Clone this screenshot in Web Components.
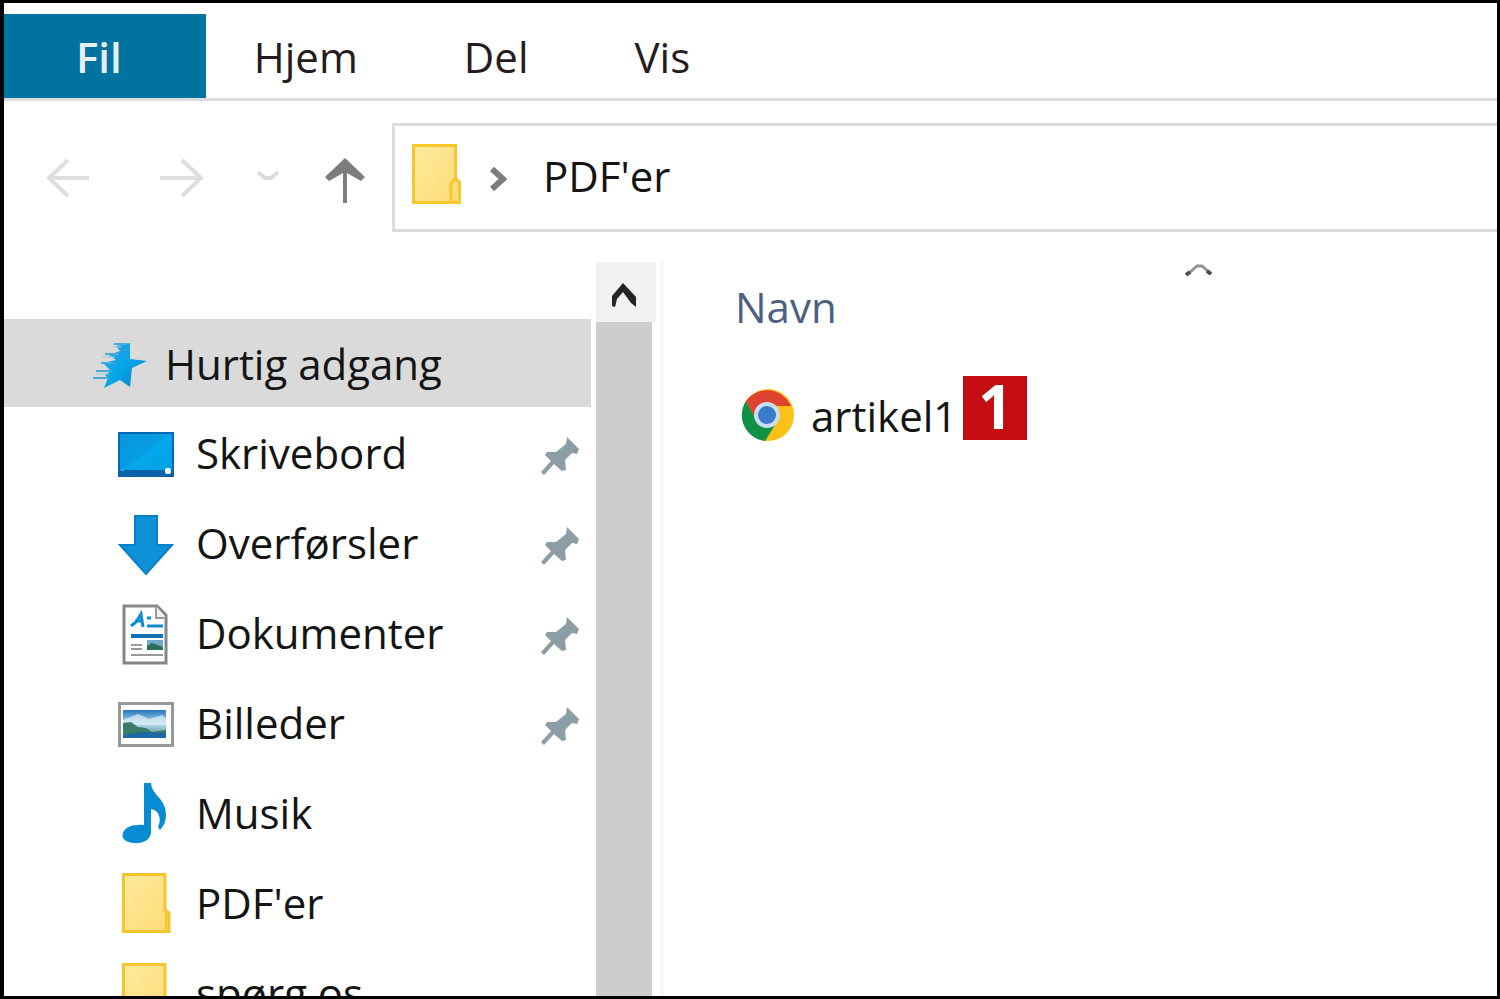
<!DOCTYPE html>
<html lang="da">
<head>
<meta charset="utf-8">
<title>PDF'er</title>
<style>
    html, body{
        height: 100%;
        margin: 0;
    }
    body{
        background: #fff;
        color: #141414;
        font-family: "Open Sans", "Noto Sans", sans-serif;
        font-size: 42px;
        line-height: 58px;
    }
</style>
</head>
<body>
<explorer-window>
    <ribbon-tabs slot="ribbon">
        <ribbon-tab active>Fil</ribbon-tab>
        <ribbon-tab>Hjem</ribbon-tab>
        <ribbon-tab>Del</ribbon-tab>
        <ribbon-tab>Vis</ribbon-tab>
    </ribbon-tabs>
    <address-bar slot="address">PDF'er</address-bar>
    <side-tree slot="sidebar">
        <tree-item icon="star" root>Hurtig adgang</tree-item>
        <tree-item icon="desktop" pinned>Skrivebord</tree-item>
        <tree-item icon="download" pinned>Overførsler</tree-item>
        <tree-item icon="document" pinned>Dokumenter</tree-item>
        <tree-item icon="picture" pinned>Billeder</tree-item>
        <tree-item icon="music">Musik</tree-item>
        <tree-item icon="folder">PDF'er</tree-item>
        <tree-item icon="folder">spørg os</tree-item>
    </side-tree>
    <file-list>
        <span slot="column">Navn</span>
        <span slot="file">artikel1</span>
        <step-badge slot="badge">1</step-badge>
    </file-list>
</explorer-window>

<script>
const icons = {
    star: {
        width: 56, height: 68,
        body: `
        <defs><linearGradient id="g" x1="0" y1="0" x2="1" y2="1">
            <stop offset="0" stop-color="#39a3dc"/><stop offset=".5" stop-color="#04a5e8"/><stop offset="1" stop-color="#1479bd"/>
        </linearGradient></defs>
        <path fill="url(#g)" d="M41 14V30L58 32 43 39 41 58 31 51 15 59 19 49 16 46 22 42 14 34 27 31 20 26 31 22 27 17Z"/>
        <path fill="none" stroke="#4aa8dc" stroke-width="2" d="M25 15H38M16 25H30M12 34H24M7 42H23M4 49H20"/>
        <path fill="none" stroke="#a3c9dc" stroke-width="1" d="M22 18H32M13 28H26M6 45H20"/>`
    },
    desktop: {
        width: 56, height: 68,
        body: `
        <defs><linearGradient id="g" x1="0" y1="0" x2="1" y2="1">
            <stop offset="0" stop-color="#0795dc"/><stop offset=".46" stop-color="#079ee3"/><stop offset=".5" stop-color="#02a9ec"/><stop offset="1" stop-color="#059cdf"/>
        </linearGradient></defs>
        <rect x="1" y="15" width="54" height="43" fill="url(#g)" stroke="#0868b4" stroke-width="2"/>
        <path fill="#0863a9" d="M1 52H55V59H1Z"/>
        <path stroke="#3aa8dd" stroke-width="2" d="M3 52H6"/>
        <rect x="47" y="50" width="6" height="6" rx="2" fill="#e9f7ff"/>`
    },
    download: {
        width: 56, height: 68,
        body: `<path fill="#0f91d8" stroke="#087fc8" stroke-width="2" d="M17 8H39V37H54L28 66 2 37H17Z"/>`
    },
    document: {
        width: 56, height: 68,
        body: `
        <path fill="#fff" stroke="#85888a" stroke-width="3" d="M6 8H39L48 17V65H6Z"/>
        <path fill="#f1f1f1" stroke="#999" stroke-width="2" d="M38 8V20H48"/>
        <path fill="none" stroke="#0a8ed4" stroke-width="3" d="M13 28L18 24 23 16 25 29M17 23H25M29 20H33M29 28H45"/>
        <path stroke="#176fb4" stroke-width="4" d="M13 38H45"/>
        <path fill="#71a9ca" d="M29 42H45V52H29Z"/>
        <path fill="#286f55" d="M29 48L34 45 45 49V52H29Z"/>
        <path stroke="#9a9a9a" stroke-width="2" d="M13 47H24M13 51H24M13 57H45"/>`
    },
    picture: {
        width: 56, height: 68,
        body: `
        <defs><linearGradient id="g" x1="0" y1="0" x2="0" y2="1">
            <stop offset="0" stop-color="#2475bd"/><stop offset=".5" stop-color="#b8ddee"/><stop offset=".75" stop-color="#7daeb8"/><stop offset="1" stop-color="#1a65a0"/>
        </linearGradient></defs>
        <rect x="1.500" y="15.500" width="53" height="42" fill="#fff" stroke="#96999a" stroke-width="3"/>
        <rect x="5" y="22" width="43" height="28" fill="url(#g)"/>
        <path fill="#e1f2f8" opacity=".7" d="M5 32L20 26 31 31 44 27 48 30V37H5Z"/>
        <path fill="#397d69" d="M5 35L13 34 20 39 28 40 34 44 48 42V46H5Z"/>
        <path fill="#1a69a4" d="M5 47L25 44 48 45V50H5Z"/>`
    },
    music: {
        width: 56, height: 68,
        body: `<path fill="#078cd4" d="M26 5H33C34 18 48 20 48 37C48 43 46 48 42 52L40 49C44 41 41 32 33 31V55C32 62 25 66 15 65C7 64 3 60 5 55C7 49 15 46 26 47Z"/>`
    },
    folder: {
        width: 56, height: 68,
        body: `
        <defs><linearGradient id="g" x1="0" y1="0" x2="1" y2="1">
            <stop offset="0" stop-color="#ffe99e"/><stop offset="1" stop-color="#fcdc75"/>
        </linearGradient></defs>
        <path fill="url(#g)" stroke="#f5c52f" stroke-width="3" d="M5.500 6.500H47V42L51 45V63.500H5.500Z"/>
        <path fill="none" stroke="#f5c52f" stroke-width="2" d="M48 44V63"/>`
    },
    openfolder: {
        width: 56, height: 68,
        body: `
        <defs><linearGradient id="g" x1="0" y1="0" x2="1" y2="1">
            <stop offset="0" stop-color="#ffe99e"/><stop offset="1" stop-color="#fcdc75"/>
        </linearGradient></defs>
        <path fill="url(#g)" stroke="#f7c72c" stroke-width="3" d="M4.500 1.500H46.500V35L50.500 38V58.500H4.500Z"/>
        <path fill="#fddc70" stroke="#f7c72c" stroke-width="3" d="M42 58V39L46 35"/>`
    },
    pin: {
        width: 38, height: 38,
        body: `<path fill="#8c9da6" d="M26 0L38 12 36 17 31 16 24 23 25 33 21 34 13 27 3 38 0 35 10 24 4 18 6 15 15 15 25 7Z"/>`
    },
    back: {
        width: 44, height: 40,
        body: `<path fill="none" stroke="#dedede" stroke-width="4" d="M42 20H1M21 2L2 20 21 38"/>`
    },
    forward: {
        width: 44, height: 40,
        body: `<path fill="none" stroke="#dedede" stroke-width="4" d="M0 20H41M22 2L41 20 22 38"/>`
    },
    recent: {
        width: 22, height: 22,
        body: `<path fill="none" stroke="#dcdcdc" stroke-width="4" d="M1 5L8 11H14L21 5"/>`
    },
    up: {
        width: 40, height: 46,
        body: `<path fill="#7d7d7d" d="M20 3L40 22 36 26 22 18V48H18V18L4 26 0 22Z"/>`
    },
    crumb: {
        width: 20, height: 24,
        body: `<path fill="none" stroke="#7c7c7c" stroke-width="6" d="M4 3L15 13 4 23"/>`
    },
    scrollup: {
        width: 26, height: 26,
        body: `<path fill="#242424" d="M12 1L25 15V25L20 21 12 10 6 17 4 25 1 24V14Z"/>`
    },
    sort: {
        width: 28, height: 14,
        body: `<path fill="none" stroke="#929292" stroke-width="3" d="M3 12L12 4H17L26 12"/><path stroke="#4e4e4e" stroke-width="4" d="M1 13L5 10M22 9L26 12"/>`
    },
    chrome: {
        width: 54, height: 54,
        body: `
        <circle cx="27" cy="26" r="26" fill="#fbc116"/>
        <path fill="#109246" d="M5 12L16 32 34 36 24 52A26 26 0 0 1 5 12Z"/>
        <path fill="#df4330" d="M5 12A26 26 0 0 1 49 15L50 17H27L14 29Z"/>
        <circle cx="26" cy="26" r="13" fill="#c9ddf3"/>
        <circle cx="26" cy="26" r="9" fill="#3c7bcb"/>`
    }
};

class AppIcon extends HTMLElement{
    constructor(){
        super();
        this.shadow = this.attachShadow({mode: 'open'});
    }

    connectedCallback(){
        const icon = icons[this.getAttribute('name')];

        this.shadow.innerHTML =
        `
        <style>
            :host{
                display: block;
                flex: none;
            }
            svg{
                display: block;
                overflow: visible;
            }
        </style>
        <svg width="${icon.width}" height="${icon.height}" viewBox="0 0 ${icon.width} ${icon.height}" aria-hidden="true">${icon.body}</svg>
        `;
    }
}
customElements.define('app-icon', AppIcon);

class ExplorerWindow extends HTMLElement{
    constructor(){
        super();
        this.shadow = this.attachShadow({mode: 'open'});
    }

    connectedCallback(){
        this.shadow.innerHTML =
        `
        <style>
            :host{
                display: flex;
                flex-direction: column;
                box-sizing: border-box;
                height: 100vh;
                border: 3px solid #000;
                border-left-width: 4px;
                overflow: hidden;
            }
            main{
                display: flex;
                flex: 1;
                min-height: 0;
                margin-top: 30px;
            }
        </style>
        <slot name="ribbon"></slot>
        <slot name="address"></slot>
        <main>
            <slot name="sidebar"></slot>
            <slot></slot>
        </main>
        `;
    }
}
customElements.define('explorer-window', ExplorerWindow);

class RibbonTabs extends HTMLElement{
    constructor(){
        super();
        this.shadow = this.attachShadow({mode: 'open'});
    }

    connectedCallback(){
        this.shadow.innerHTML =
        `
        <style>
            :host{
                display: block;
                padding-top: 11px;
                border-bottom: 3px solid #dcdee2;
            }
            nav{
                display: flex;
            }
        </style>
        <nav><slot></slot></nav>
        `;
    }
}
customElements.define('ribbon-tabs', RibbonTabs);

class RibbonTab extends HTMLElement{
    constructor(){
        super();
        this.shadow = this.attachShadow({mode: 'open'});
    }

    connectedCallback(){
        this.shadow.innerHTML =
        `
        <style>
            :host{
                display: block;
            }
            button{
                height: 84px;
                padding: 2px 58px 0 48px;
                border: 0;
                background: none;
                color: #241c20;
                font: inherit;
            }
            :host([active]) button{
                padding: 2px 84px 0 72px;
                background: #0073a0;
                color: #e8eef0;
                font-weight: 600;
            }
        </style>
        <button type="button"><slot></slot></button>
        `;
    }
}
customElements.define('ribbon-tab', RibbonTab);

class AddressBar extends HTMLElement{
    constructor(){
        super();
        this.shadow = this.attachShadow({mode: 'open'});
    }

    connectedCallback(){
        this.shadow.innerHTML =
        `
        <style>
            :host{
                display: flex;
                align-items: center;
                padding: 22px 0 0 8px;
            }
            button{
                display: flex;
                align-items: center;
                justify-content: center;
                width: 113px;
                height: 64px;
                padding: 0;
                border: 0;
                background: none;
            }
            .recent{
                width: 59px;
            }
            .up{
                width: 95px;
            }
            nav{
                display: flex;
                align-items: center;
                flex: 1;
                box-sizing: border-box;
                height: 109px;
                padding-left: 14px;
                border: 3px solid #dcdcdc;
                border-right: 0;
            }
            .crumb{
                width: 66px;
            }
            a{
                padding: 0 12px 4px;
                color: inherit;
                text-decoration: none;
            }
        </style>
        <button type="button" aria-label="Tilbage"><app-icon name="back"></app-icon></button>
        <button type="button" aria-label="Frem"><app-icon name="forward"></app-icon></button>
        <button class="recent" type="button" aria-label="Seneste placeringer"><app-icon name="recent"></app-icon></button>
        <button class="up" type="button" aria-label="Op"><app-icon name="up"></app-icon></button>
        <nav>
            <app-icon name="openfolder"></app-icon>
            <button class="crumb" type="button" aria-label="Undermapper"><app-icon name="crumb"></app-icon></button>
            <a href="#"><slot></slot></a>
        </nav>
        `;
    }
}
customElements.define('address-bar', AddressBar);

class SideTree extends HTMLElement{
    constructor(){
        super();
        this.shadow = this.attachShadow({mode: 'open'});
    }

    connectedCallback(){
        this.shadow.innerHTML =
        `
        <style>
            :host{
                display: flex;
                flex: none;
                overflow: hidden;
                border-right: 4px solid #f7f7f7;
            }
            nav{
                width: 587px;
                padding-top: 57px;
            }
            .scrollbar{
                display: flex;
                flex-direction: column;
                width: 60px;
                margin: 0 4px 0 5px;
            }
            button{
                display: flex;
                align-items: center;
                justify-content: center;
                flex: none;
                height: 60px;
                padding: 6px 4px 0 0;
                border: 0;
                background: #f1f1f1;
            }
            .thumb{
                flex: 1;
                margin-right: 4px;
                background: #cdcdcf;
            }
        </style>
        <nav><slot></slot></nav>
        <div class="scrollbar">
            <button type="button" aria-label="Rul op"><app-icon name="scrollup"></app-icon></button>
            <div class="thumb"></div>
        </div>
        `;
    }
}
customElements.define('side-tree', SideTree);

class TreeItem extends HTMLElement{
    constructor(){
        super();
        this.shadow = this.attachShadow({mode: 'open'});
    }

    connectedCallback(){
        const pin = this.hasAttribute('pinned') ? '<app-icon class="pin" name="pin"></app-icon>' : '';

        this.shadow.innerHTML =
        `
        <style>
            :host{
                display: block;
            }
            a{
                display: flex;
                align-items: center;
                gap: 22px;
                box-sizing: border-box;
                height: 90px;
                padding: 0 12px 0 114px;
                color: inherit;
                text-decoration: none;
                white-space: nowrap;
            }
            :host([root]) a{
                gap: 20px;
                height: 88px;
                padding-left: 85px;
                background: #dadada;
            }
            span{
                padding-top: 2px;
            }
            .pin{
                margin-left: auto;
                padding-top: 8px;
            }
        </style>
        <a href="#"><app-icon name="${this.getAttribute('icon')}"></app-icon><span><slot></slot></span>${pin}</a>
        `;
    }
}
customElements.define('tree-item', TreeItem);

class FileList extends HTMLElement{
    constructor(){
        super();
        this.shadow = this.attachShadow({mode: 'open'});
    }

    connectedCallback(){
        this.shadow.innerHTML =
        `
        <style>
            :host{
                display: block;
                flex: 1;
                min-width: 0;
            }
            table{
                width: 100%;
                border-collapse: collapse;
            }
            th, td{
                padding: 0;
                text-align: left;
                font-weight: 400;
            }
            th{
                padding-bottom: 40px;
            }
            th button{
                display: block;
                width: 100%;
                padding: 0 0 0 71px;
                border: 0;
                background: none;
                color: #4c607f;
                font: inherit;
                text-align: left;
            }
            th app-icon{
                padding: 0 0 2px 450px;
            }
            .file{
                display: flex;
                align-items: center;
                height: 80px;
                padding-left: 77px;
            }
            a{
                display: flex;
                align-items: center;
                gap: 16px;
                color: inherit;
                text-decoration: none;
            }
            slot[name="badge"]{
                display: block;
                align-self: flex-start;
                margin-left: 6px;
            }
        </style>
        <table>
            <thead>
                <tr><th><button type="button"><app-icon name="sort"></app-icon><slot name="column"></slot></button></th></tr>
            </thead>
            <tbody>
                <tr><td>
                    <div class="file">
                        <a href="#"><app-icon name="chrome"></app-icon><slot name="file"></slot></a>
                        <slot name="badge"></slot>
                    </div>
                </td></tr>
            </tbody>
        </table>
        `;
    }
}
customElements.define('file-list', FileList);

class StepBadge extends HTMLElement{
    constructor(){
        super();
        this.shadow = this.attachShadow({mode: 'open'});
    }

    connectedCallback(){
        this.shadow.innerHTML =
        `
        <style>
            :host{
                display: block;
                width: 64px;
                height: 64px;
                background: #c40d12;
                color: #fff;
                font-size: 60px;
                font-weight: 700;
                line-height: 60px;
                text-align: center;
            }
        </style>
        <slot></slot>
        `;
    }
}
customElements.define('step-badge', StepBadge);
</script>
</body>
</html>
